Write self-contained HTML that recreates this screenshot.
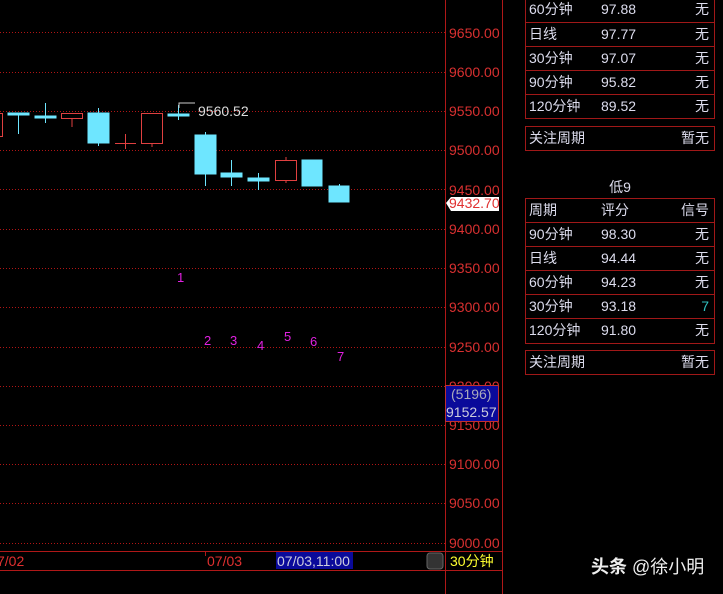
<!DOCTYPE html>
<html><head><meta charset="utf-8"><style>
body{margin:0;width:723px;height:594px;background:#000;overflow:hidden;position:relative;font-family:"Liberation Sans","Noto Sans CJK SC",sans-serif;}
.t{position:absolute;left:525px;width:190px;border:1px solid #a01818;box-sizing:border-box;}
.r{height:24px;border-bottom:1px solid #a01818;box-sizing:border-box;position:relative;color:#dde;font-size:14px;line-height:23px;}
.r:last-child{border-bottom:none}
.r span{position:absolute}
.a{left:3px}.b{left:75px}.c{right:5px}
</style></head><body>
<svg width="723" height="594" style="position:absolute;left:0;top:0" font-family="Liberation Sans, Noto Sans CJK SC, sans-serif">
<g stroke="#b01515" stroke-dasharray="1,2" stroke-width="1">
<line x1="0" y1="32.5" x2="445" y2="32.5"/><line x1="0" y1="72.5" x2="445" y2="72.5"/><line x1="0" y1="111.5" x2="445" y2="111.5"/><line x1="0" y1="150.5" x2="445" y2="150.5"/><line x1="0" y1="189.5" x2="445" y2="189.5"/><line x1="0" y1="229.5" x2="445" y2="229.5"/><line x1="0" y1="268.5" x2="445" y2="268.5"/><line x1="0" y1="307.5" x2="445" y2="307.5"/><line x1="0" y1="347.5" x2="445" y2="347.5"/><line x1="0" y1="386.5" x2="445" y2="386.5"/><line x1="0" y1="425.5" x2="445" y2="425.5"/><line x1="0" y1="464.5" x2="445" y2="464.5"/><line x1="0" y1="503.5" x2="445" y2="503.5"/><line x1="0" y1="543.5" x2="445" y2="543.5"/>
</g>
<g stroke="#b01818" stroke-width="1">
<line x1="445.5" y1="0" x2="445.5" y2="594"/><line x1="502.5" y1="0" x2="502.5" y2="594"/>
<line x1="0" y1="551.5" x2="502" y2="551.5"/><line x1="0" y1="570.5" x2="502" y2="570.5"/>
</g>
<g fill="#d83030" font-size="14">
<text x="449" y="38">9650.00</text><text x="449" y="77">9600.00</text><text x="449" y="116">9550.00</text><text x="449" y="155">9500.00</text><text x="449" y="195">9450.00</text><text x="449" y="234">9400.00</text><text x="449" y="273">9350.00</text><text x="449" y="312">9300.00</text><text x="449" y="352">9250.00</text><text x="449" y="391">9200.00</text><text x="449" y="430">9150.00</text><text x="449" y="469">9100.00</text><text x="449" y="508">9050.00</text><text x="449" y="548">9000.00</text>
</g>
<g stroke="#e04040" fill="none" stroke-width="1">
<rect x="-5.5" y="113.5" width="8" height="23"/>
<rect x="61.5" y="113.5" width="21" height="5"/><line x1="72" y1="118" x2="72" y2="127"/>
<line x1="115" y1="143.5" x2="136" y2="143.5"/><line x1="125.5" y1="134" x2="125.5" y2="149"/>
<rect x="141.5" y="113.5" width="21" height="30"/><line x1="152" y1="143" x2="152" y2="147"/>
<rect x="275.5" y="160.5" width="21" height="20"/><line x1="286" y1="157" x2="286" y2="160"/><line x1="286" y1="181" x2="286" y2="183"/>
</g>
<g stroke="#6ee6ff" fill="#6ee6ff" stroke-width="1">
<rect x="8" y="113" width="21" height="2"/><line x1="18.5" y1="113" x2="18.5" y2="134"/>
<rect x="35" y="116" width="21" height="2"/><line x1="45.5" y1="103" x2="45.5" y2="123"/>
<rect x="88" y="113" width="21" height="30"/><line x1="98.5" y1="108" x2="98.5" y2="146"/>
<rect x="168" y="114" width="21" height="2"/><line x1="178.5" y1="105" x2="178.5" y2="120"/>
<rect x="195" y="135" width="21" height="39"/><line x1="205.5" y1="132" x2="205.5" y2="186"/>
<rect x="221" y="173" width="21" height="4"/><line x1="231.5" y1="160" x2="231.5" y2="186"/>
<rect x="248" y="178" width="21" height="3"/><line x1="258.5" y1="173" x2="258.5" y2="190"/>
<rect x="302" y="160" width="20" height="26"/>
<rect x="329" y="186" width="20" height="16"/><line x1="339.5" y1="184" x2="339.5" y2="186"/>
</g>
<polyline points="179,108 179,103 195,103" stroke="#ccc" fill="none"/>
<text x="198" y="116" fill="#ddd" font-size="14">9560.52</text>
<g fill="#e020e0" font-size="13">
<text x="177" y="282">1</text><text x="204" y="345">2</text><text x="230" y="345">3</text><text x="257" y="350">4</text><text x="284" y="341">5</text><text x="310" y="346">6</text><text x="337" y="361">7</text>
</g>
<polygon points="446,203 451,197 499,197 499,211 451,211" fill="#fff"/>
<text x="449" y="208" fill="#e03030" font-size="14">9432.70</text>
<rect x="445.5" y="385.5" width="53" height="36" fill="#0a0a9a" stroke="#c03030"/>
<text x="451" y="399" fill="#aab" font-size="14">(5196)</text>
<text x="446" y="417" fill="#ccd" font-size="14">9152.57</text>
<g fill="#e03030" font-size="14"><text x="-3" y="566">7/02</text><text x="207" y="566">07/03</text></g>
<line x1="205.5" y1="551" x2="205.5" y2="556" stroke="#b01818"/>
<rect x="276" y="552" width="77" height="17" fill="#0a0a9a"/>
<text x="277" y="566" fill="#ccd" font-size="14">07/03,11:00</text>
<rect x="427" y="553" width="16" height="16" rx="3" fill="#333" stroke="#666"/>
<text x="450" y="566" fill="#ffff30" font-size="14">30分钟</text>
<text x="591" y="573" fill="#eee" font-size="18" font-weight="bold">头条 <tspan font-weight="normal">@徐小明</tspan></text>
<text x="620" y="192" fill="#dde" font-size="14" text-anchor="middle">低9</text>
</svg>
<div class="t" style="top:-3px;height:122px">
<div class="r" style="height:25px"><span class="a">60分钟</span><span class="b">97.88</span><span class="c">无</span></div>
<div class="r"><span class="a">日线</span><span class="b">97.77</span><span class="c">无</span></div>
<div class="r"><span class="a">30分钟</span><span class="b">97.07</span><span class="c">无</span></div>
<div class="r"><span class="a">90分钟</span><span class="b">95.82</span><span class="c">无</span></div>
<div class="r"><span class="a">120分钟</span><span class="b">89.52</span><span class="c">无</span></div>
</div>
<div class="t" style="top:126px;height:25px"><div class="r"><span class="a">关注周期</span><span class="c">暂无</span></div></div>
<div class="t" style="top:198px;height:146px">
<div class="r"><span class="a">周期</span><span class="b">评分</span><span class="c">信号</span></div>
<div class="r"><span class="a">90分钟</span><span class="b">98.30</span><span class="c">无</span></div>
<div class="r"><span class="a">日线</span><span class="b">94.44</span><span class="c">无</span></div>
<div class="r"><span class="a">60分钟</span><span class="b">94.23</span><span class="c">无</span></div>
<div class="r"><span class="a">30分钟</span><span class="b">93.18</span><span class="c" style="color:#30c0c0">7</span></div>
<div class="r"><span class="a">120分钟</span><span class="b">91.80</span><span class="c">无</span></div>
</div>
<div class="t" style="top:350px;height:25px"><div class="r"><span class="a">关注周期</span><span class="c">暂无</span></div></div>
</body></html>
